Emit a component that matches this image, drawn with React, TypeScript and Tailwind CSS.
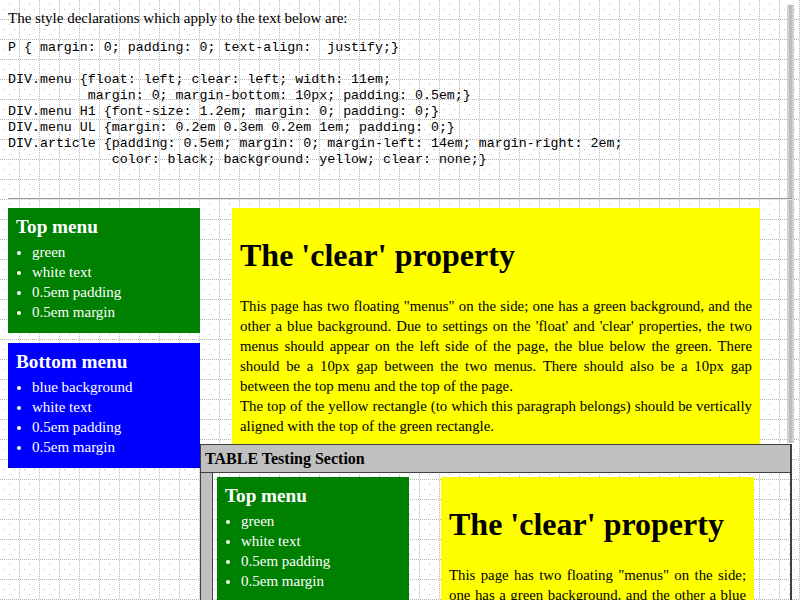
import React from 'react';

const css = `P { margin: 0; padding: 0; text-align:  justify;}

DIV.menu {float: left; clear: left; width: 11em;
          margin: 0; margin-bottom: 10px; padding: 0.5em;}
DIV.menu H1 {font-size: 1.2em; margin: 0; padding: 0;}
DIV.menu UL {margin: 0.2em 0.3em 0.2em 1em; padding: 0;}
DIV.article {padding: 0.5em; margin: 0; margin-left: 14em; margin-right: 2em;
             color: black; background: yellow; clear: none;}`;

const outerLines: [string, boolean][] = [
  ['This page has two floating "menus" on the side; one has a green background, and the', true],
  ["other a blue background. Due to settings on the 'float' and 'clear' properties, the two", true],
  ['menus should appear on the left side of the page, the blue below the green. There', true],
  ['should be a 10px gap between the two menus. There should also be a 10px gap', true],
  ['between the top menu and the top of the page.', false],
  ['The top of the yellow rectangle (to which this paragraph belongs) should be vertically', true],
  ['aligned with the top of the green rectangle.', false],
];

const innerLines: [string, boolean][] = [
  ['This page has two floating "menus" on the side;', true],
  ['one has a green background, and the other a blue', true],
];

function Menu({ title, items, color }: { title: string; items: string[]; color: string }) {
  return (
    <div className={`float-left clear-left w-[192px] p-2 mb-[10px] text-white ${color}`}>
      <h1 className="text-[19.2px] font-bold leading-[22px]">{title}</h1>
      <ul className="list-disc mt-[3.5px] mb-[3.5px] ml-4 mr-[5px] leading-[20px]">
        {items.map((it) => (
          <li key={it}>{it}</li>
        ))}
      </ul>
    </div>
  );
}

function Lines({ lines }: { lines: [string, boolean][] }) {
  return (
    <>
      {lines.map(([t, j], i) => (
        <div
          key={i}
          className={j ? 'whitespace-nowrap text-justify [text-align-last:justify]' : 'whitespace-nowrap'}
        >
          {t}
        </div>
      ))}
    </>
  );
}

function Article({ lines, rest }: { lines: [string, boolean][]; rest?: string }) {
  return (
    <div className="ml-[224px] mr-8 p-2 bg-[#ffff00] text-black">
      <h1 className="text-[32px] font-bold leading-[37px] mt-[21px] mb-[22px]">The 'clear' property</h1>
      <div className="leading-[20px] text-[14.8px]">
        <Lines lines={lines} />
        {rest && <div className="text-justify">{rest}</div>}
      </div>
    </div>
  );
}

function Content({ lines, rest }: { lines: [string, boolean][]; rest?: string }) {
  return (
    <>
      <Menu title="Top menu" color="bg-[#008000]" items={['green', 'white text', '0.5em padding', '0.5em margin']} />
      <Menu
        title="Bottom menu"
        color="bg-[#0000ff]"
        items={['blue background', 'white text', '0.5em padding', '0.5em margin']}
      />
      <Article lines={lines} rest={rest} />
    </>
  );
}

export default function App() {
  return (
    <div
      className="relative w-[800px] h-[600px] overflow-hidden p-2 bg-white text-black text-[15px] font-['Liberation_Serif',serif]
        [background-image:conic-gradient(at_19px_1px,#b4b4b4_25%,transparent_0),conic-gradient(at_1px_19px,transparent_50%,#b4b4b4_0_75%,transparent_0),radial-gradient(circle_at_9.5px_4.5px,#b4b4b4_0.6px,transparent_0.9px),radial-gradient(circle_at_4.5px_9.5px,#b4b4b4_0.6px,transparent_0.9px),radial-gradient(circle_at_14.5px_9.5px,#b4b4b4_0.6px,transparent_0.9px),radial-gradient(circle_at_9.5px_14.5px,#b4b4b4_0.6px,transparent_0.9px)]
        [background-size:20px_2px,2px_20px,20px_20px,20px_20px,20px_20px,20px_20px]"
    >
      {/* scrollbar strip */}
      <div className="absolute left-[787px] top-[5px] w-[7px] h-[438px] bg-[#bdbdbd] border-l-2 border-l-[#d2d2d2] border-r-2 border-r-[#cfcfcf]"></div>

      <p className="leading-[20px]">The style declarations which apply to the text below are:</p>
      <pre className="mt-3 text-[13.3px] leading-[16px] font-['Liberation_Mono',monospace]">{css}</pre>
      <hr className="relative mt-[30px] mb-2 border-t border-t-[#9a9a9a] border-b border-b-[#e4e4e4]" />

      <Content lines={outerLines} />

      {/* TABLE Testing Section */}
      <div className="flow-root border-l border-t border-r-2 border-[#404040]">
        <div className="h-[28px] bg-[#c0c0c0] border-b border-[#404040] px-1 flex items-center font-bold text-[16px]">
          TABLE Testing Section
        </div>
        <div className="flex">
          <div className="w-[12px] shrink-0 bg-[#c0c0c0] border-r border-[#404040]"></div>
          <div className="flex-1 p-1 flow-root">
            <Content
              lines={innerLines}
              rest="and the other a blue background. Due to settings on the 'float' and 'clear' properties, the two menus should appear on the left side of the page, the blue below the green."
            />
          </div>
        </div>
      </div>
    </div>
  );
}
